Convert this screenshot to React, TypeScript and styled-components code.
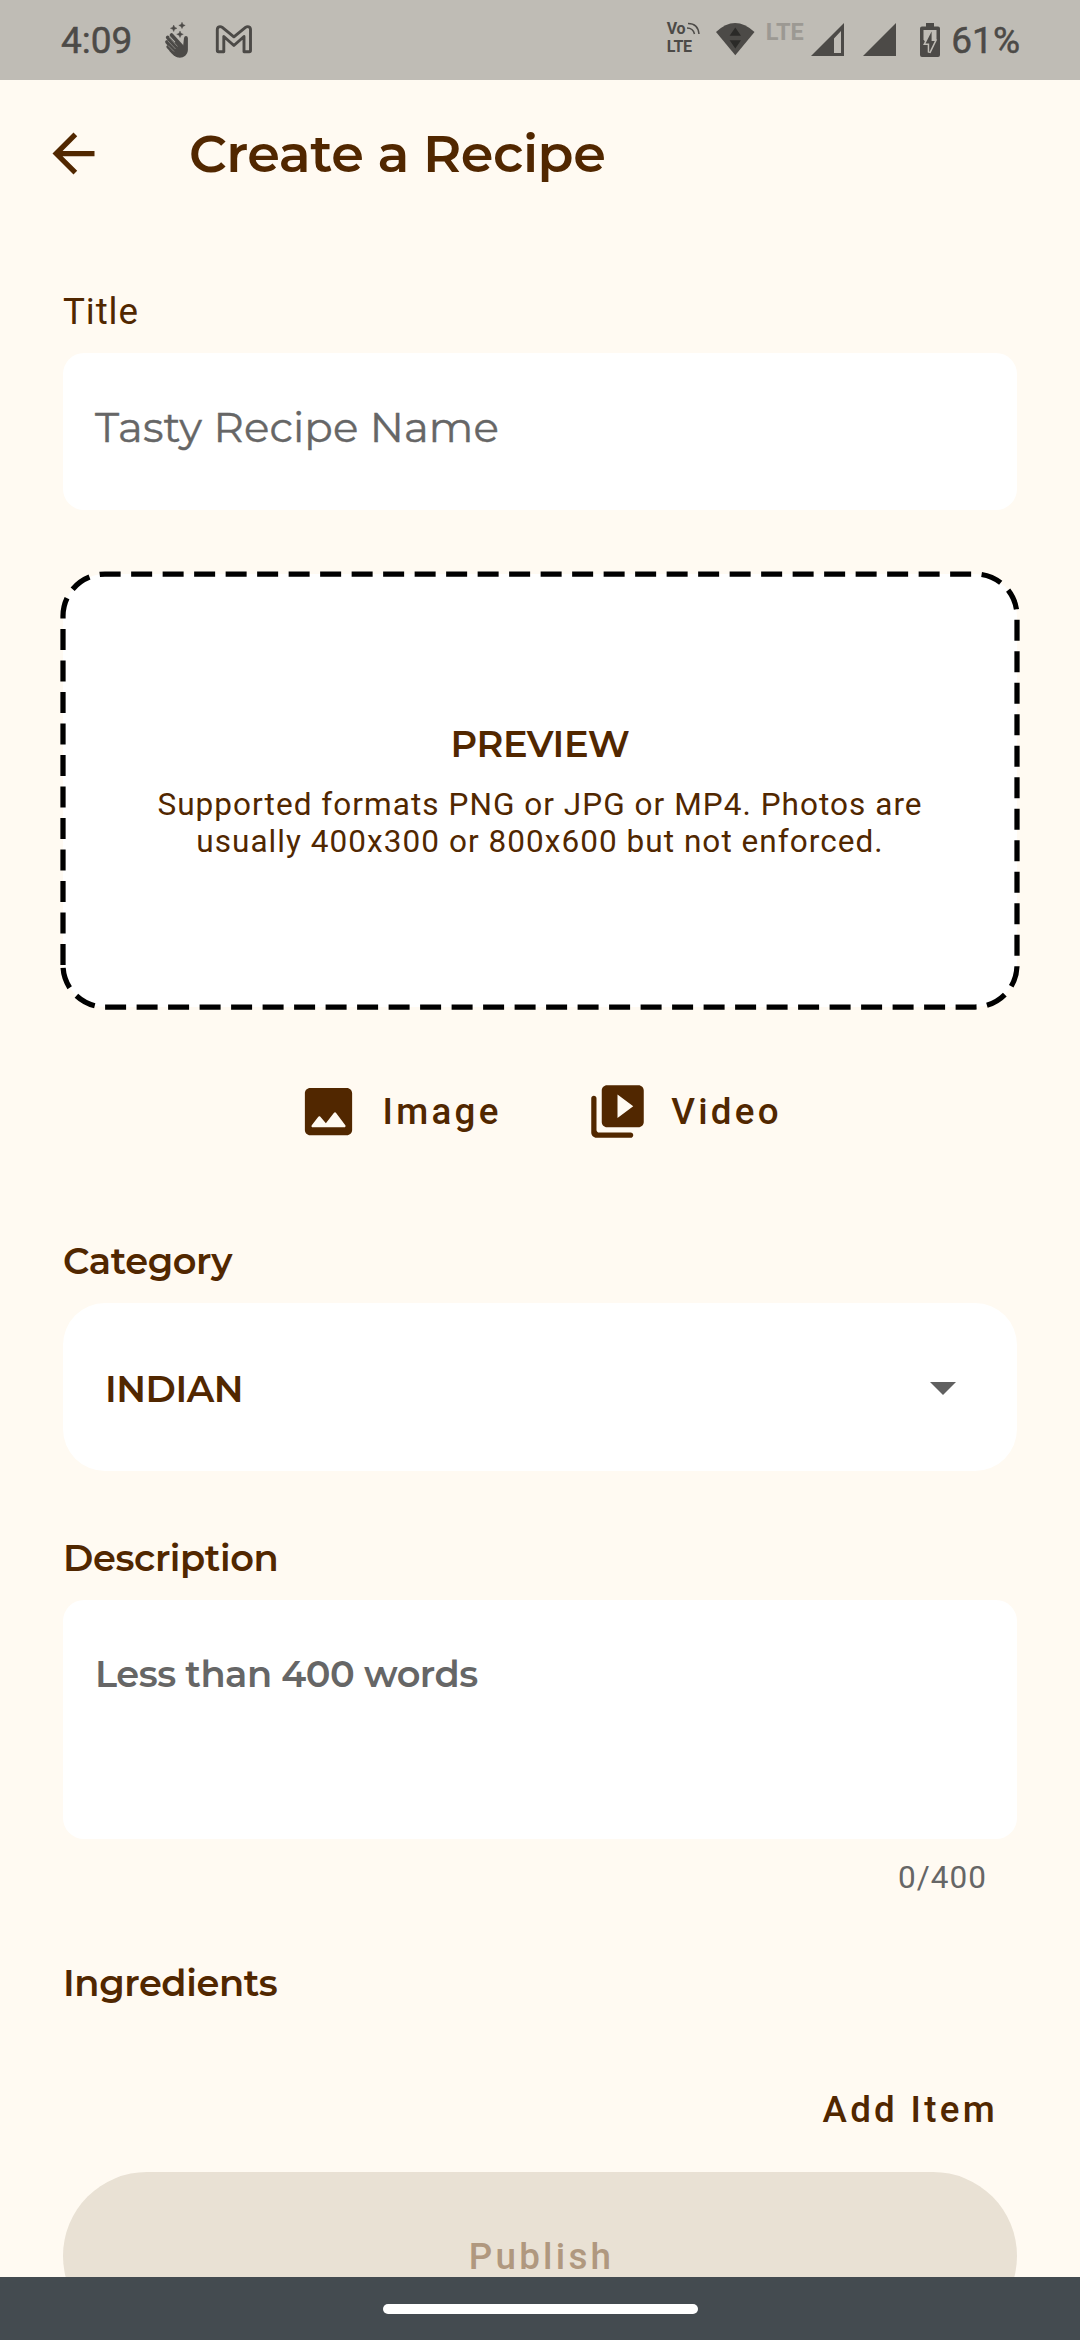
import React from "react";
import styled, { createGlobalStyle } from "styled-components";

const ink = "#512700";
const cream = "#fffaf2";
const grey = "#666666";
const status = "#4c4a47";
const statusBg = "#bfbcb5";
const roboto = `Roboto, "Liberation Sans", sans-serif`;
const display = `Montserrat, Inter, "Liberation Sans", sans-serif`;

const GlobalStyle = createGlobalStyle`
  * { box-sizing: border-box; }
  body { margin: 0; background: ${cream}; }
  button { border: 0; padding: 0; background: none; }
`;

const Screen = styled.div`
  width: 1080px;
  height: 2340px;
  display: flex;
  flex-direction: column;
  overflow: hidden;
  background: ${cream};
  color: ${ink};
  font-family: ${roboto};
`;

const StatusBar = styled.header`
  flex: none;
  height: 80px;
  display: flex;
  justify-content: space-between;
  align-items: flex-start;
  padding: 0 60px 0 61px;
  background: ${statusBg};
  color: ${status};
`;
const StatusGroup = styled.div`
  display: flex;
  align-items: flex-start;
`;
const StatusText = styled.span<{ $gap?: number }>`
  margin: 19px 0 0 ${(p) => p.$gap ?? 0}px;
  font-size: 37px;
  line-height: 44px;
  white-space: nowrap;
  -webkit-text-stroke: 0.5px currentColor;
`;
const StatusIcon = styled.svg<{ $gap: number }>`
  display: block;
  height: 80px;
  margin-left: ${(p) => p.$gap}px;
`;
const Volte = styled.div`
  display: flex;
  flex-direction: column;
  width: 36px;
  height: 80px;
  padding-top: 19.5px;
  font-size: 16px;
  line-height: 18.5px;
  font-weight: 700;
  letter-spacing: -0.3px;
`;
const VoRow = styled.div`
  display: flex;
  align-items: center;
  gap: 2px;
`;
const LteTag = styled.span`
  width: 40px;
  margin: 18px 0 0 11px;
  font-size: 23.5px;
  line-height: 28px;
  font-weight: 700;
  color: #9c9993;
`;

const AppBar = styled.div`
  flex: none;
  height: 147px;
  display: flex;
  align-items: center;
  gap: 84px;
  padding-left: 42px;
`;
const Heading = styled.h1`
  margin: 0 0 1px;
  font-family: ${display};
  font-size: 52.5px;
  line-height: 60px;
  font-weight: 600;
  letter-spacing: -0.43px;
`;

const Form = styled.main`
  flex: 1;
  min-height: 0;
  display: flex;
  flex-direction: column;
  padding: 61px 63px 0;
  overflow: hidden;
  > * {
    flex: none;
  }
`;
const Label = styled.label<{ $top?: number }>`
  margin-top: ${(p) => p.$top ?? 0}px;
  font-size: 36.75px;
  line-height: 48px;
  letter-spacing: 0.9px;
`;
const DisplayLabel = styled(Label)`
  font-family: ${display};
  font-weight: 600;
  letter-spacing: -0.4px;
`;
const Field = styled.div<{ $height: number; $gap: number }>`
  height: ${(p) => p.$height}px;
  margin-top: ${(p) => p.$gap}px;
  padding: 48px 32px;
  border-radius: 21px;
  background: #fff;
`;
const Hint = styled.span<{ $large?: boolean }>`
  display: block;
  font-family: ${display};
  font-size: ${(p) => (p.$large ? 42 : 36.75)}px;
  font-weight: ${(p) => (p.$large ? 400 : 600)};
  line-height: 52px;
  letter-spacing: ${(p) => (p.$large ? 0.15 : -0.48)}px;
  color: ${grey};
  -webkit-text-stroke: ${(p) => (p.$large ? 0.4 : 0)}px currentColor;
`;

const Preview = styled.section`
  position: relative;
  height: 433px;
  margin-top: 63.5px;
  padding-top: 146px;
  display: flex;
  flex-direction: column;
  align-items: center;
  border-radius: 42px;
  background: #fff;
`;
const Dashes = styled.svg`
  position: absolute;
  inset: 0;
  overflow: visible;
`;
const PreviewTitle = styled.div`
  font-family: ${display};
  font-size: 36.75px;
  line-height: 48px;
  font-weight: 600;
  letter-spacing: -0.42px;
`;
const PreviewText = styled.p`
  margin: 18px 0 0;
  text-align: center;
  font-size: 31.5px;
  line-height: 37px;
  letter-spacing: 1.05px;
`;

const MediaRow = styled.div`
  display: flex;
  align-items: center;
  height: 126px;
  margin-top: 42px;
  padding-left: 234px;
  gap: 84px;
`;
const MediaButton = styled.button`
  display: flex;
  align-items: center;
  gap: 22.5px;
  color: ${ink};
`;
const ButtonText = styled.span`
  padding-top: 1px;
  font-family: ${roboto};
  font-size: 36.75px;
  line-height: 44px;
  font-weight: 500;
  letter-spacing: 3.28px;
`;

const Select = styled.div`
  display: flex;
  align-items: flex-start;
  justify-content: space-between;
  height: 168px;
  margin-top: 18px;
  padding: 60px 61px 0 42px;
  border-radius: 42px;
  background: #fff;
`;
const Choice = styled(Hint)`
  color: ${ink};
`;
const Caret = styled.svg`
  margin-top: 19px;
`;

const Counter = styled.div`
  align-self: flex-end;
  margin: 19px 30px 0 0;
  font-size: 31.5px;
  line-height: 40px;
  letter-spacing: 1.05px;
  color: ${grey};
`;
const AddItem = styled.button`
  display: flex;
  align-self: flex-end;
  height: 45px;
  margin: 80px 19px 0 0;
  color: ${ink};
`;
const Publish = styled.button`
  height: 168px;
  margin-top: 40px;
  padding: 1px 0 0 3px;
  border-radius: 84px;
  background: #e9e1d4;
  color: #b0987f;
`;

const NavBar = styled.footer`
  flex: none;
  height: 63px;
  display: flex;
  justify-content: center;
  align-items: flex-start;
  padding-top: 27px;
  background: #444b50;
`;
const HomePill = styled.div`
  width: 315px;
  height: 10px;
  border-radius: 5px;
  background: #fff;
`;

const WaveIcon = () => (
  <StatusIcon $gap={32} width="26" viewBox="164 0 26 80">
    <path
      d="M171.500 35L182 46.500M167.700 37.500L178 49M167 42L176 52M168.200 46.800L175 54"
      stroke={status}
      strokeWidth="3.700"
      strokeLinecap="round"
    />
    <path
      d="M184 38q.3-2 2-2t1.900 2V50c-.4 5.500-5 8.400-10 7.500-3-.6-5-3-8.500-6.500L176 41l7 6z"
      fill={status}
    />
    <path d="M169 37l8.500 9.500M167.500 40.500l8 8.500M168 45.500l6 6" stroke={statusBg} strokeWidth="0.500" />
    <path
      d="M173.700 25l1 2.300 2.300 1-2.300 1-1 2.300-1-2.300-2.300-1 2.300-1zM182 22.200l1 2.200 2.200 1-2.200 1-1 2.200-1-2.200-2.200-1 2.200-1zM180 31l1 2.300 2.300 1-2.300 1-1 2.300-1-2.300-2.300-1 2.300-1z"
      fill={status}
      stroke={status}
      strokeWidth="0.400"
    />
  </StatusIcon>
);

const MailIcon = () => (
  <StatusIcon $gap={25} width="38" viewBox="215 0 38 80">
    <path
      d="M217.300 50.500V29.500c0-3 3-3.600 5-2.100l11.600 9.400 11.600-9.400c2-1.500 5-.9 5 2.100v21q0 1.200-1.200 1.200H244V36.500L233.900 45.500 223.800 36.500V51.700h-5.300q-1.200 0-1.200-1.200z"
      fill="none"
      stroke={status}
      strokeWidth="2.900"
      strokeLinejoin="round"
    />
  </StatusIcon>
);

const WifiIcon = () => (
  <StatusIcon $gap={12} width="40" viewBox="714 0 40 80">
    <path d="M715 32q19-18 38.500 0L734.300 55.300z" fill={status} />
    <path d="M734.300 27.500l5.700 8.300h-11.400zM728.600 40.200H740l-5.700 8.200z" fill="#2b2a28" />
  </StatusIcon>
);

const SignalIcon = ({ gap, partial }: { gap: number; partial?: boolean }) => (
  <StatusIcon $gap={gap} width="33" viewBox="0 0 33 80">
    <path
      d={partial ? "M0 56L33 23V56zM23 38.500V53h7V31z" : "M0 56L33 23V56z"}
      fill={status}
      fillRule="evenodd"
    />
  </StatusIcon>
);

const BatteryIcon = () => (
  <StatusIcon $gap={24} width="20" viewBox="919 0 20 80">
    <path
      d="M925 23h8v3.500h4q2 0 2 2V55q0 2-2 2h-16q-2 0-2-2V28.500q0-2 2-2h4z"
      fill={status}
    />
    <path d="M922.500 30h13v9.500l-2.500 3h-8.500l-2-3z" fill={statusBg} />
    <path
      d="M930.600 31.500L924.500 43.500h3.700V52.500L933.800 41h-3.200z"
      fill={status}
      stroke={statusBg}
      strokeWidth="3"
      paintOrder="stroke"
    />
  </StatusIcon>
);

export default function App() {
  return (
    <Screen>
      <GlobalStyle />
      <StatusBar>
        <StatusGroup>
          <StatusText>4:09</StatusText>
          <WaveIcon />
          <MailIcon />
        </StatusGroup>
        <StatusGroup>
          <Volte>
            <VoRow>
              <span>Vo</span>
              <svg width="13" height="13" viewBox="0 0 13 13" fill="none" stroke={status} strokeWidth="1.500">
                <path d="M1 1.500q10 0 11 10.500M0 6q6 0 7.500 6" />
              </svg>
            </VoRow>
            <span>LTE</span>
          </Volte>
          <WifiIcon />
          <LteTag>LTE</LteTag>
          <SignalIcon gap={5} partial />
          <SignalIcon gap={19} />
          <BatteryIcon />
          <StatusText $gap={11.5}>61%</StatusText>
        </StatusGroup>
      </StatusBar>

      <AppBar>
        <svg width="63" height="63" viewBox="0 0 24 24" fill={ink}>
          <path d="M20 11H7.830l5.590-5.590L12 4l-8 8 8 8 1.410-1.410L7.830 13H20v-2z" />
        </svg>
        <Heading>Create a Recipe</Heading>
      </AppBar>

      <Form>
        <Label>Title</Label>
        <Field $height={157} $gap={17}>
          <Hint $large>Tasty Recipe Name</Hint>
        </Field>

        <Preview>
          <Dashes width="954" height="433" viewBox="0 0 954 433" fill="none">
            <path
              d="M0 391V42A42 42 0 0 1 42 0H912A42 42 0 0 1 954 42V391A42 42 0 0 1 912 433H42A42 42 0 0 1 0 391"
              stroke="#000"
              strokeWidth="5.250"
              strokeDasharray="21 10.500"
            />
          </Dashes>
          <PreviewTitle>PREVIEW</PreviewTitle>
          <PreviewText>
            Supported formats PNG or JPG or MP4. Photos are
            <br />
            usually 400x300 or 800x600 but not enforced.
          </PreviewText>
        </Preview>

        <MediaRow>
          <MediaButton>
            <svg width="63" height="63" viewBox="0 0 24 24" fill="currentColor">
              <path d="M21 19V5c0-1.100-.9-2-2-2H5c-1.100 0-2 .9-2 2v14c0 1.100.9 2 2 2h14c1.100 0 2-.9 2-2zM8.900 13.980l2.100 2.530 3.100-3.990c.2-.26.6-.26.8.01l3.510 4.680c.25.33.01.8-.4.8H6.020c-.42 0-.65-.48-.39-.81L8.120 14c.19-.26.57-.27.78-.02z" />
            </svg>
            <ButtonText>Image</ButtonText>
          </MediaButton>
          <MediaButton>
            <svg width="63" height="63" viewBox="0 0 24 24" fill="currentColor">
              <path d="M3 6c-.55 0-1 .45-1 1v13c0 1.100.9 2 2 2h13c.55 0 1-.45 1-1s-.45-1-1-1H5c-.55 0-1-.45-1-1V7c0-.55-.45-1-1-1zm17-4H8c-1.100 0-2 .9-2 2v12c0 1.100.9 2 2 2h12c1.100 0 2-.9 2-2V4c0-1.100-.9-2-2-2zm-8 12.500v-9l6 4.500-6 4.500z" />
            </svg>
            <ButtonText>Video</ButtonText>
          </MediaButton>
        </MediaRow>

        <DisplayLabel $top={62.5}>Category</DisplayLabel>
        <Select>
          <Choice>INDIAN</Choice>
          <Caret width="26" height="13" viewBox="0 0 26 13">
            <path d="M0 0h26L13 13z" fill="#606060" />
          </Caret>
        </Select>

        <DisplayLabel $top={63}>Description</DisplayLabel>
        <Field $height={239} $gap={18}>
          <Hint>Less than 400 words</Hint>
        </Field>
        <Counter>0/400</Counter>

        <DisplayLabel $top={61}>Ingredients</DisplayLabel>
        <AddItem>
          <ButtonText>Add Item</ButtonText>
        </AddItem>
        <Publish>
          <ButtonText>Publish</ButtonText>
        </Publish>
      </Form>

      <NavBar>
        <HomePill />
      </NavBar>
    </Screen>
  );
}
